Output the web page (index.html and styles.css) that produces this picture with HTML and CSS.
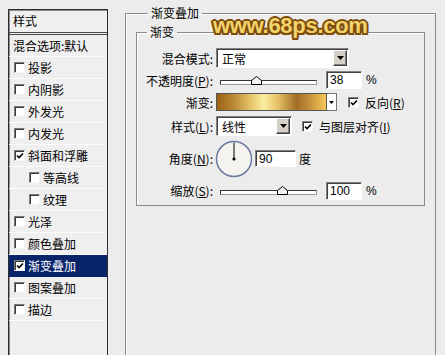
FILE: index.html
```html
<!DOCTYPE html>
<html lang="zh-CN">
<head>
    <meta charset="UTF-8">
    <meta name="viewport" content="width=device-width, initial-scale=1.0">
    <title>图层样式 - 渐变叠加</title>
    <link rel="stylesheet" href="styles.css">
</head>
<body>
    <div class="dialog">
        <div class="style-list">
            <div class="list-head">样式</div>
            <div class="item plain">混合选项:默认</div>
            <div class="item"><span class="check"></span>投影</div>
            <div class="item"><span class="check"></span>内阴影</div>
            <div class="item"><span class="check"></span>外发光</div>
            <div class="item"><span class="check"></span>内发光</div>
            <div class="item"><span class="check on"><svg width="8" height="8" viewBox="0 0 8 8"><path d="M1 3.5l2 2 4-4" fill="none" stroke="#000" stroke-width="1.6"/></svg></span>斜面和浮雕</div>
            <div class="item sub"><span class="check"></span>等高线</div>
            <div class="item sub"><span class="check"></span>纹理</div>
            <div class="item"><span class="check"></span>光泽</div>
            <div class="item"><span class="check"></span>颜色叠加</div>
            <div class="item selected"><span class="check on"><svg width="8" height="8" viewBox="0 0 8 8"><path d="M1 3.5l2 2 4-4" fill="none" stroke="#000" stroke-width="1.6"/></svg></span>渐变叠加</div>
            <div class="item"><span class="check"></span>图案叠加</div>
            <div class="item"><span class="check"></span>描边</div>
        </div>

        <fieldset class="group outer">
            <legend>渐变叠加</legend>
            <fieldset class="group inner">
                <legend>渐变</legend>

                <div class="row r1">
                    <span class="lbl">混合模式:</span>
                    <div class="field select wide">
                        <span class="value">正常</span>
                        <span class="drop"><svg width="7" height="4" viewBox="0 0 7 4"><path d="M0 0h7L3.5 4z"/></svg></span>
                    </div>
                </div>

                <div class="row r2">
                    <span class="lbl">不透明度(<u>P</u>):</span>
                    <div class="slider">
                        <div class="track"></div>
                        <svg class="thumb" style="left: 37%" width="11" height="9" viewBox="0 0 11 9"><path d="M0.5 8.5V4.5L5.5 0.5 10.5 4.5V8.5z" fill="#f2f2f2" stroke="#000"/></svg>
                    </div>
                    <div class="field num">38</div>
                    <span class="unit">%</span>
                </div>

                <div class="row r3">
                    <span class="lbl">渐变:</span>
                    <div class="gradient"></div>
                    <div class="grad-drop"><svg width="5" height="3" viewBox="0 0 5 3"><path d="M0 0h5L2.5 3z"/></svg></div>
                    <span class="check on opt"><svg width="8" height="8" viewBox="0 0 8 8"><path d="M1 3.5l2 2 4-4" fill="none" stroke="#000" stroke-width="1.6"/></svg></span>
                    <span class="opt-text">反向(<u>R</u>)</span>
                </div>

                <div class="row r4">
                    <span class="lbl">样式(<u>L</u>):</span>
                    <div class="field select small">
                        <span class="value">线性</span>
                        <span class="drop"><svg width="7" height="4" viewBox="0 0 7 4"><path d="M0 0h7L3.5 4z"/></svg></span>
                    </div>
                    <span class="check on opt align"><svg width="8" height="8" viewBox="0 0 8 8"><path d="M1 3.5l2 2 4-4" fill="none" stroke="#000" stroke-width="1.6"/></svg></span>
                    <span class="opt-text">与图层对齐(<u>I</u>)</span>
                </div>

                <div class="row r5">
                    <span class="lbl">角度(<u>N</u>):</span>
                    <svg class="dial" width="38" height="38" viewBox="0 0 38 38">
                        <circle cx="19" cy="19" r="17.5" fill="#f4f3ee" stroke="#6c7ba3" stroke-width="1.5"/>
                        <line x1="19" y1="19" x2="19" y2="2.5" stroke="#000" stroke-width="1"/>
                        <circle cx="19" cy="19" r="1.6" fill="#000"/>
                    </svg>
                    <div class="field num angle">90</div>
                    <span class="unit deg">度</span>
                </div>

                <div class="row r6">
                    <span class="lbl">缩放(<u>S</u>):</span>
                    <div class="slider">
                        <div class="track"></div>
                        <svg class="thumb" style="left: 64%" width="11" height="9" viewBox="0 0 11 9"><path d="M0.5 8.5V4.5L5.5 0.5 10.5 4.5V8.5z" fill="#f2f2f2" stroke="#000"/></svg>
                    </div>
                    <div class="field num">100</div>
                    <span class="unit">%</span>
                </div>
            </fieldset>
        </fieldset>

        <div class="watermark">www.68ps.com</div>
    </div>
</body>
</html>
```

FILE: styles.css
```css
body {
    margin: 0;
    height: 355px;
    overflow: hidden;
    background: #ececec;
    font-family: "Noto Sans CJK SC", sans-serif;
    font-size: 12px;
    color: #000;
}
.dialog {
    position: relative;
    display: flex;
    align-items: flex-start;
    padding-left: 8px;
}

/* left style list, runs off the bottom of the dialog */
.style-list {
    flex: none;
    width: 100px;
    height: 346px;
    margin-top: 9px;
    box-sizing: border-box;
    border: 1px solid #2e2e2e;
    border-bottom: none;
    box-shadow: inset 1px 1px #8a8a8a;
    background: #efefef;
}
.list-head {
    height: 22px;
    line-height: 22px;
    padding-left: 4px;
    border-bottom: 3px double #4a4a4a;
}
.item {
    height: 21px;
    display: flex;
    align-items: center;
    gap: 3px;
    padding-left: 5px;
    border-bottom: 1px solid #fbfbfb;
    white-space: nowrap;
}
.item.plain {
    padding-left: 4px;
}
.item.sub {
    padding-left: 20px;
}
.item.selected {
    background: #0a246a;
    color: #fff;
    border-bottom-color: #0a246a;
}

.check {
    flex: none;
    display: flex;
    align-items: center;
    justify-content: center;
    width: 11px;
    height: 11px;
    box-sizing: border-box;
    background: #fff;
    border: 1px solid;
    border-color: #7c7c7c #f4f4f4 #f4f4f4 #7c7c7c;
    box-shadow: inset 1px 1px #3a3a3a;
}
.check svg {
    margin: 1px 0 0 1px;
}

/* group boxes */
.group {
    margin: 0;
    padding: 0;
    box-sizing: border-box;
    border: 1px solid #8a8a8a;
    box-shadow: inset 1px 1px #fff;
}
.group legend {
    padding: 0 3px;
    line-height: 14px;
}
.outer {
    flex: none;
    width: 311px;
    height: 349px;
    margin: 6px 0 0 17px;
    padding: 0 10px;
    border-bottom: none;
}
.outer > legend {
    margin-left: 12px;
}
.inner {
    margin-top: 5px;
    padding: 8px 0 2px;
}
.inner > legend {
    margin-left: 10px;
}

/* option rows */
.row {
    display: flex;
    align-items: center;
    white-space: nowrap;
}
.r1, .r2, .r3 { height: 22px; }
.r4 { height: 26px; }
.r5 { height: 39px; }
.r6 { height: 25px; }
.lbl {
    flex: none;
    width: 79px;
    box-sizing: border-box;
    padding-right: 3px;
    text-align: right;
}

.field {
    box-sizing: border-box;
    background: #fff;
    border: 1px solid;
    border-color: #808080 #fff #fff #808080;
    box-shadow: inset 1px 1px #404040;
}
.select {
    display: flex;
    align-items: center;
    justify-content: space-between;
    height: 20px;
    padding: 0 1px 0 5px;
}
.select.wide { width: 133px; }
.select.small { width: 76px; }
.drop {
    display: flex;
    align-items: center;
    justify-content: center;
    width: 14px;
    height: 16px;
    box-sizing: border-box;
    background: #d4d0c8;
    border: 1px solid;
    border-color: #fff #404040 #404040 #fff;
    box-shadow: inset -1px -1px #808080;
}

.num {
    width: 36px;
    height: 18px;
    margin-left: 9px;
    padding-left: 3px;
    line-height: 16px;
    font-family: "Liberation Sans", Arial, sans-serif;
    font-size: 12px;
}
.unit {
    margin-left: 4px;
    font-family: "Liberation Sans", Arial, sans-serif;
}

.slider {
    position: relative;
    width: 97px;
    height: 9px;
    margin-left: 4px;
}
.track {
    position: absolute;
    left: 0;
    right: 0;
    bottom: 0;
    height: 5px;
    box-sizing: border-box;
    background: #fff;
    border: 1px solid #333;
    border-right-color: #999;
    border-bottom-color: #999;
}
.thumb {
    position: absolute;
    bottom: 0;
    margin-left: -5px;
}

.gradient {
    width: 111px;
    height: 18px;
    box-sizing: border-box;
    border: 1px solid #555;
    background: linear-gradient(to right, #9a6216 0%, #b88432 14%, #e3c164 30%, #fbeea0 43%, #e7c468 55%, #a26c26 73%, #c8943c 86%, #f7c85a 100%);
}
.grad-drop {
    display: flex;
    align-items: center;
    justify-content: center;
    width: 10px;
    height: 18px;
    box-sizing: border-box;
    background: #fff;
    border: 1px solid #777;
    border-left: none;
}
.opt {
    margin-left: 11px;
}
.opt.align {
    margin-left: 10px;
}
.opt-text {
    margin-left: 6px;
}

.dial {
    margin-left: -1px;
}
.angle {
    width: 41px;
    height: 17px;
    margin-left: 2px;
}
.deg {
    margin-left: 3px;
    font-family: "Noto Sans CJK SC", sans-serif;
}

.watermark {
    position: absolute;
    left: 213px;
    top: 13px;
    font-family: "Liberation Sans", Arial, sans-serif;
    font-weight: bold;
    font-size: 22px;
    letter-spacing: -0.3px;
    color: #f3d46c;
    text-shadow: 2px 0 #7d4c0a, -2px 0 #7d4c0a, 0 2px #7d4c0a, 0 -2px #7d4c0a,
        1.5px 1.5px #7d4c0a, -1.5px 1.5px #7d4c0a, 1.5px -1.5px #7d4c0a, -1.5px -1.5px #7d4c0a;
}
```
